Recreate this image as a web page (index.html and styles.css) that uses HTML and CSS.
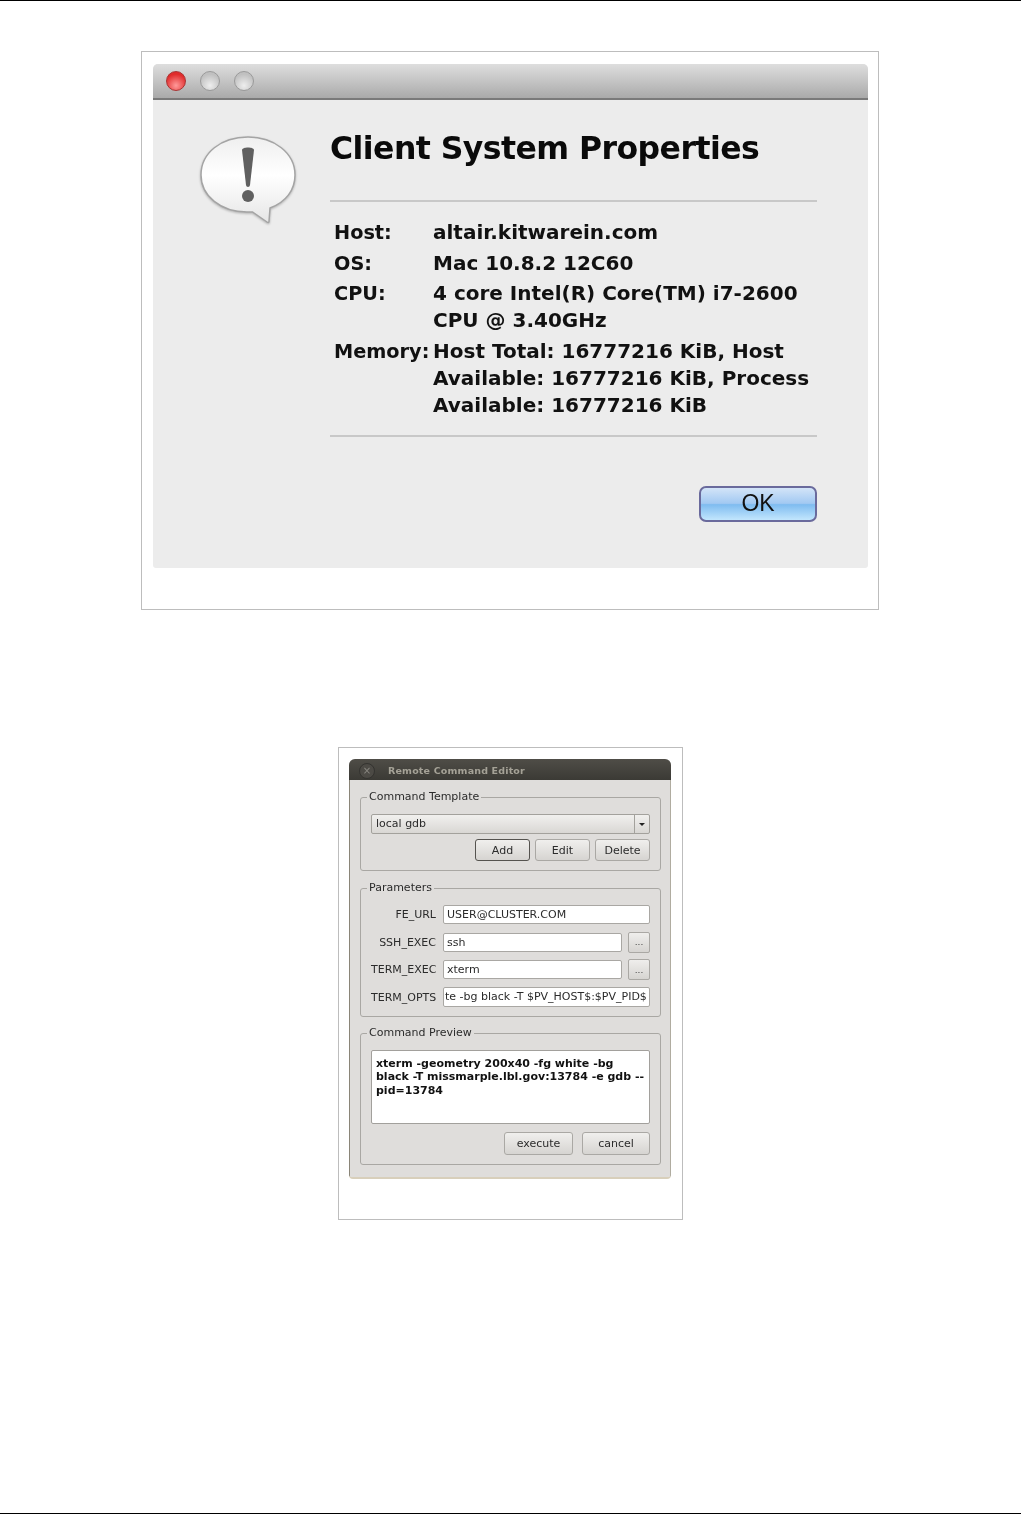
FILE: index.html
```html
<!DOCTYPE html>
<html lang="en">
<head>
    <meta charset="UTF-8">
    <title>Client System Properties</title>
    <link rel="stylesheet" href="styles.css">
</head>
<body>
    <div class="page">
        <!-- Figure 1: Mac dialog -->
        <div class="figure figure-mac">
            <div class="mac-window">
                <div class="mac-titlebar">
                    <span class="light light-red"></span>
                    <span class="light"></span>
                    <span class="light"></span>
                </div>
                <div class="mac-body">
                    <svg class="alert-icon" width="98" height="92" viewBox="0 0 98 92">
                        <defs>
                            <linearGradient id="bubble" x1="0" y1="0" x2="0" y2="1">
                                <stop offset="0" stop-color="#efefef"/>
                                <stop offset="0.45" stop-color="#ffffff"/>
                                <stop offset="1" stop-color="#e6e6e6"/>
                            </linearGradient>
                        </defs>
                        <path d="M49 2C22 2 2 18 2 40c0 21 20 37 46 37 2 0 4 0 5.500 0L68 87c1 .8 1.800 .5 2-.5L71 73C87 67 96 55 96 40 96 18 75 2 49 2z" fill="url(#bubble)" stroke="#a4a4a4" stroke-width="1.500"/>
                        <path d="M43 15c0-3.500 12-3.500 12 0l-4 35c-.3 2.500-3.700 2.500-4 0z" fill="#606060"/>
                        <circle cx="49" cy="61" r="6" fill="#606060"/>
                    </svg>
                    <div class="mac-main">
                        <h1>Client System Properties</h1>
                        <div class="rule"></div>
                        <div class="props">
                            <div class="prop-label">Host:</div><div>altair.kitwarein.com</div>
                            <div class="prop-label">OS:</div><div>Mac 10.8.2 12C60</div>
                            <div class="prop-label">CPU:</div><div>4 core Intel(R) Core(TM) i7-2600<br>CPU @ 3.40GHz</div>
                            <div class="prop-label">Memory:</div><div>Host Total: 16777216 KiB, Host<br>Available: 16777216 KiB, Process<br>Available: 16777216 KiB</div>
                        </div>
                        <div class="rule rule-end"></div>
                        <div class="mac-actions">
                            <button class="ok-button">OK</button>
                        </div>
                    </div>
                </div>
            </div>
        </div>

        <!-- Figure 2: Qt dialog -->
        <div class="figure figure-qt">
            <div class="qt-window">
                <div class="qt-titlebar">
                    <span class="qt-close">×</span>
                    <span class="qt-title">Remote Command Editor</span>
                </div>
                <div class="qt-body">
                    <fieldset class="group group-template">
                        <legend>Command Template</legend>
                        <div class="combo">
                            <span class="combo-text">local gdb</span>
                            <span class="combo-arrow"></span>
                        </div>
                        <div class="button-row">
                            <button class="qt-button default-button">Add</button>
                            <button class="qt-button">Edit</button>
                            <button class="qt-button">Delete</button>
                        </div>
                    </fieldset>

                    <fieldset class="group group-params">
                        <legend>Parameters</legend>
                        <div class="param-row">
                            <label>FE_URL</label>
                            <div class="field">USER@CLUSTER.COM</div>
                        </div>
                        <div class="param-row">
                            <label>SSH_EXEC</label>
                            <div class="field">ssh</div>
                            <button class="browse-button">...</button>
                        </div>
                        <div class="param-row">
                            <label>TERM_EXEC</label>
                            <div class="field">xterm</div>
                            <button class="browse-button">...</button>
                        </div>
                        <div class="param-row">
                            <label>TERM_OPTS</label>
                            <div class="field field-clipped">te -bg black -T $PV_HOST$:$PV_PID$</div>
                        </div>
                    </fieldset>

                    <fieldset class="group group-preview">
                        <legend>Command Preview</legend>
                        <div class="preview">xterm -geometry 200x40 -fg white -bg<br>black -T missmarple.lbl.gov:13784 -e gdb --<br>pid=13784</div>
                        <div class="button-row button-row-preview">
                            <button class="qt-button execute-button">execute</button>
                            <button class="qt-button cancel-button">cancel</button>
                        </div>
                    </fieldset>
                </div>
            </div>
        </div>
    </div>
</body>
</html>
```

FILE: styles.css
```css
html, body {
    margin: 0;
    padding: 0;
    background: white;
}

.page {
    box-sizing: border-box;
    height: 1514px;
    border-top: 1px solid black;
    border-bottom: 1px solid black;
    padding-top: 50px;
    display: flex;
    flex-direction: column;
    align-items: center;
}

.figure {
    box-sizing: border-box;
    border: 1px solid #bdbdbd;
}

/* Mac dialog */
.figure-mac {
    width: 738px;
    height: 559px;
    margin-right: 1px;
    padding: 12px 10px 0 11px;
}

.mac-window {
    height: 504px;
    background: #ececec;
    border-radius: 5px 5px 3px 3px;
    font-family: "DejaVu Sans", sans-serif;
    color: #111;
    overflow: hidden;
    filter: blur(0.45px);
}

.mac-titlebar {
    box-sizing: border-box;
    height: 36px;
    padding: 7px 0 0 13px;
    display: flex;
    gap: 14px;
    background: linear-gradient(#dedede, #aaaaaa);
    border-bottom: 2px solid #7a7a7a;
}

.light {
    box-sizing: border-box;
    width: 20px;
    height: 20px;
    border-radius: 50%;
    border: 1px solid #9a9a9a;
    background: radial-gradient(circle at 50% 75%, #eeeeee, #c0c0c0 70%);
}

.light-red {
    border-color: #a33;
    background: radial-gradient(circle at 50% 75%, #ff9a9a, #e02c2c 70%);
}

.mac-body {
    display: flex;
}

.alert-icon {
    flex: none;
    margin: 35px 33px 0 46px;
    filter: drop-shadow(0 1px 1px rgba(0, 0, 0, 0.25));
}

.mac-main {
    width: 487px;
    padding-top: 25px;
}

h1 {
    margin: 0 0 29px;
    font-size: 31.500px;
    letter-spacing: -0.550px;
    line-height: 46px;
    font-weight: bold;
    color: #0a0a0a;
}

.rule {
    height: 2px;
    background: #c8c8c8;
}

.rule-end {
    margin-top: 16px;
}

.props {
    margin: 17px 0 0 4px;
    display: grid;
    grid-template-columns: 99px 1fr;
    row-gap: 3.500px;
    font-size: 20px;
    line-height: 27px;
    font-weight: bold;
    white-space: nowrap;
}

.prop-label {
    font-size: 19.300px;
}

.mac-actions {
    margin-top: 49px;
    display: flex;
    justify-content: flex-end;
}

.ok-button {
    width: 118px;
    height: 36px;
    padding: 0;
    border: 2px solid #6a6a9c;
    border-radius: 7px;
    background: linear-gradient(#d3e4f8, #a2c9f2 48%, #7fbcf0 52%, #c2e6fd);
    font-family: "Liberation Sans", sans-serif;
    font-size: 23px;
    color: #111;
}

/* Qt dialog */
.figure-qt {
    margin-top: 137px;
    width: 345px;
    height: 473px;
    padding: 11px 11px 0 10px;
}

.qt-window {
    height: 420px;
    border-radius: 6px 6px 4px 4px;
    background: #dfdddb;
    border-bottom: 2px solid #d8cfbb;
    box-sizing: border-box;
    font-family: "DejaVu Sans", sans-serif;
    font-size: 11px;
    color: #2b2b2b;
    overflow: hidden;
    filter: blur(0.3px);
}

.qt-titlebar {
    box-sizing: border-box;
    height: 21px;
    display: flex;
    align-items: center;
    padding: 2px 0 0 10px;
    background: linear-gradient(#4f4d47, #3b3a35);
}

.qt-close {
    box-sizing: border-box;
    width: 16px;
    height: 16px;
    border-radius: 50%;
    background: #4c4a45;
    border: 1px solid #343330;
    color: #8a8882;
    font-size: 10px;
    line-height: 14px;
    text-align: center;
}

.qt-title {
    margin-left: 13px;
    font-size: 9.500px;
    font-weight: bold;
    letter-spacing: 0.170px;
    color: #a5a297;
}

.qt-body {
    box-sizing: border-box;
    height: 397px;
    padding: 10px 10px 0 11px;
    border-left: 1px solid #8a8578;
    border-right: 1px solid #b0aca0;
}

.group {
    box-sizing: border-box;
    margin: 0 0 0 -1px;
    padding: 0 10px;
    width: 301px;
    min-width: 0;
    border: 1px solid #a9a7a3;
    border-radius: 3px;
}

.group legend {
    margin-left: -4px;
    padding: 0 2px;
    line-height: 14px;
}

.group-template {
    height: 81px;
}

.group-params {
    margin-top: 10px;
    height: 136px;
}

.group-preview {
    margin-top: 9px;
    height: 139px;
}

.combo {
    box-sizing: border-box;
    height: 20px;
    margin-top: 10px;
    display: flex;
    border: 1px solid #a3a19c;
    border-radius: 2px;
    background: linear-gradient(#f1f0ee, #d9d7d4);
}

.combo-text {
    flex: 1;
    padding-left: 4px;
    line-height: 18px;
}

.combo-arrow {
    width: 14px;
    border-left: 1px solid #a3a19c;
    position: relative;
}

.combo-arrow::after {
    content: "";
    position: absolute;
    left: 4px;
    top: 8px;
    border-left: 3px solid transparent;
    border-right: 3px solid transparent;
    border-top: 3px solid #222;
}

.button-row {
    margin-top: 5px;
    display: flex;
    justify-content: flex-end;
    gap: 5px;
}

.qt-button {
    box-sizing: border-box;
    width: 55px;
    height: 22px;
    padding: 0;
    border: 1px solid #aaa8a4;
    border-radius: 3px;
    background: linear-gradient(#f0efed, #d6d4d1);
    font-family: inherit;
    font-size: 11px;
    color: #2b2b2b;
}

.default-button {
    border-color: #55534f;
}

.param-row {
    height: 27.500px;
    display: flex;
    align-items: center;
}

.param-row:first-of-type {
    margin-top: 6px;
}

.param-row label {
    width: 65px;
    margin-right: 7px;
    flex: none;
    text-align: right;
    white-space: nowrap;
}

.field {
    box-sizing: border-box;
    flex: 1;
    min-width: 0;
    height: 19px;
    padding-left: 3px;
    line-height: 17px;
    background: white;
    border: 1px solid #a9a7a3;
    border-radius: 2px;
    white-space: nowrap;
}

.field-clipped {
    height: 20px;
    padding-left: 1px;
    line-height: 18px;
}

.browse-button {
    box-sizing: border-box;
    flex: none;
    width: 22px;
    height: 21px;
    margin-left: 6px;
    padding: 0;
    border: 1px solid #aaa8a4;
    border-radius: 2px;
    background: linear-gradient(#efeeec, #d6d4d1);
    font-family: inherit;
    font-size: 9px;
    color: #444;
}

.preview {
    box-sizing: border-box;
    height: 74px;
    margin-top: 10px;
    padding: 5.500px 4px;
    background: white;
    border: 1px solid #a2a09c;
    border-radius: 2px;
    font-weight: bold;
    line-height: 13.500px;
    color: #111;
    white-space: nowrap;
}

.button-row-preview {
    margin-top: 8px;
    gap: 9px;
}

.execute-button {
    width: 69px;
    height: 23px;
}

.cancel-button {
    width: 68px;
    height: 23px;
}
```
